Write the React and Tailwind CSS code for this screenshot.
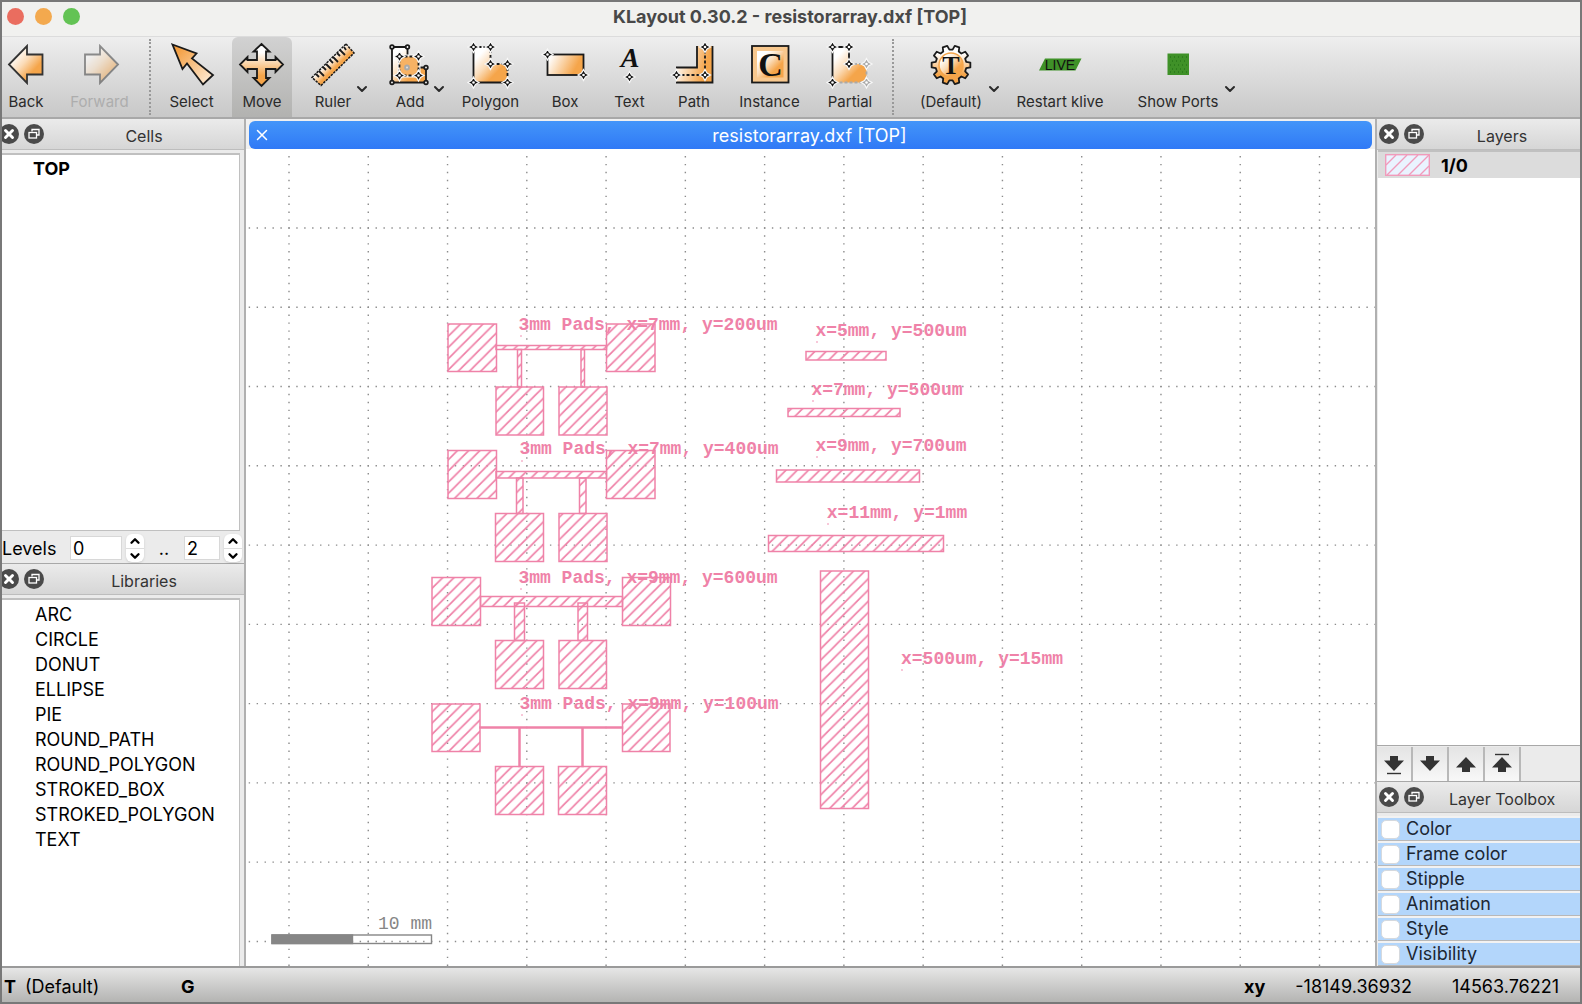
import React, { useState } from 'react';
import { ChevronDown, ChevronUp, X } from 'lucide-react';

const LIBRARIES = ['ARC', 'CIRCLE', 'DONUT', 'ELLIPSE', 'PIE', 'ROUND_PATH', 'ROUND_POLYGON', 'STROKED_BOX', 'STROKED_POLYGON', 'TEXT'];
const TOOLBOX = ['Color', 'Frame color', 'Stipple', 'Animation', 'Style', 'Visibility'];

const PINK = '#ef82a8';
const GRID = 79.27;

// x, y, width, height
const SHAPES = [
  // 7mm x 200um
  [202, 175, 48.5, 47.5], [360.5, 175, 48.5, 47.5], [250, 196.5, 110.5, 4], [271.5, 200.5, 4, 37.5], [335, 200.5, 3.5, 37.5], [250, 238, 47.5, 48], [313, 238, 48, 48],
  // 7mm x 400um
  [202, 301.5, 48.5, 48], [360.5, 301.5, 48.5, 48], [250, 322.5, 110.5, 6.5], [270.5, 329, 6.5, 35.5], [333.5, 329, 6.5, 35.5], [249.5, 364.5, 48, 48], [313, 364.5, 48, 48],
  // 9mm x 600um
  [186, 428.5, 48.5, 48], [376.5, 428.5, 48, 48], [234.5, 447.5, 142, 10], [268.5, 454, 10, 37.5], [332, 454, 9.5, 37.5], [249.5, 491.5, 48, 48], [313, 491.5, 47.5, 48],
  // 9mm x 100um
  [186, 555, 48, 47.5], [376.5, 555, 47.5, 47.5], [234, 578, 142.5, 1], [273, 579, 1, 38.5], [336, 579, 1, 38.5], [249.5, 617.5, 48, 48], [312.5, 617.5, 48, 48],
  // single bars
  [560, 202.5, 80, 8.5], [542, 259.5, 112, 8], [530.5, 321, 143, 12], [522.5, 386.5, 175, 16], [574.5, 422, 48, 237.5],
];

const LABELS = [
  { x: 402, y: 181, text: '3mm Pads, x=7mm, y=200um', dot: [275, 187] },
  { x: 403, y: 305, text: '3mm Pads, x=7mm, y=400um', dot: [276, 312] },
  { x: 402, y: 434, text: '3mm Pads, x=9mm, y=600um', dot: [275, 440] },
  { x: 403, y: 560, text: '3mm Pads, x=9mm, y=100um', dot: [276, 566] },
  { x: 645, y: 187, text: 'x=5mm, y=500um', dot: [571, 193] },
  { x: 641, y: 246, text: 'x=7mm, y=500um', dot: [567, 252] },
  { x: 645, y: 302, text: 'x=9mm, y=700um', dot: [571, 308] },
  { x: 651, y: 369, text: 'x=11mm, y=1mm', dot: [582, 375] },
  { x: 736, y: 515, text: 'x=500um, y=15mm', dot: [656, 521] },
];

const Star = ({ x, y, color = '#111' }) => (
  <g transform={`translate(${x} ${y})`}>
    <path d="M0 -5.5 L2 -2 L5.5 0 L2 2 L0 5.5 L-2 2 L-5.5 0 L-2 -2 Z" fill={color} stroke="#f8f8f8" strokeWidth="1.2" />
    <circle r="1.3" fill="#fff" stroke="none" />
  </g>
);

const Icon = ({ children, className }) => (
  <svg viewBox="0 0 44 44" className={`size-11 shrink-0 overflow-visible ${className || ''}`} fill="none" stroke="#1a1a1a" strokeWidth="1.8" aria-hidden="true">
    {children}
  </svg>
);

const IconDefs = () => (
  <svg className="absolute size-0" aria-hidden="true">
    <defs>
      <linearGradient id="diag" x1="0" y1="0" x2="1" y2="1">
        <stop offset="0.2" stopColor="#fff" />
        <stop offset="0.45" stopColor="#fbdcb8" />
        <stop offset="0.7" stopColor="#f5a54a" />
      </linearGradient>
      <linearGradient id="diagBack" x1="0" y1="0" x2="1" y2="1">
        <stop offset="0.1" stopColor="#f39c3c" />
        <stop offset="1" stopColor="#fef0e0" />
      </linearGradient>
      <linearGradient id="down" x1="0" y1="0" x2="0" y2="1">
        <stop offset="0.2" stopColor="#fff" />
        <stop offset="0.75" stopColor="#f5a54a" />
      </linearGradient>
      <linearGradient id="right" x1="0" y1="0" x2="1" y2="0.3">
        <stop offset="0.1" stopColor="#fff" />
        <stop offset="0.9" stopColor="#f5a54a" />
      </linearGradient>
      <linearGradient id="across" x1="0.35" y1="0.35" x2="0.65" y2="0.65">
        <stop offset="0.2" stopColor="#fff" />
        <stop offset="0.7" stopColor="#f5a54a" />
      </linearGradient>
    </defs>
  </svg>
);

const gearPoints = Array.from({ length: 40 }, (_, i) => {
  const phase = i % 4;
  const r = phase < 2 ? 19.5 : 15.5;
  const a = ((Math.floor(i / 4) * 36 + [-7, 7, 12, 24][phase] + 18) * Math.PI) / 180;
  return `${22 + r * Math.sin(a)},${22 - r * Math.cos(a)}`;
}).join(' ');

const icons = {
  Back: <Icon><path d="M5 21.5 L23 3 V11.5 H38.5 V31.5 H23 V40 Z" fill="url(#diag)" stroke="#333" /></Icon>,
  Forward: <Icon className="opacity-45"><path d="M40 21.5 L22 3 V11.5 H7 V31.5 H22 V40 Z" fill="url(#diag)" /></Icon>,
  Select: <Icon><path d="M2.5 1.5 L26.5 10.5 L22 15.5 L43 32 L33 41.5 L17 20.5 L12.5 26 Z" fill="url(#diagBack)" /></Icon>,
  Move: <Icon><path d="M21.5 1 L29.5 8.5 H26 V17 H35.5 V14 L43 21.5 L35.5 29 V26 H26 V35 H29.5 L21.5 43 L13.5 35 H17 V26 H7.5 V29 L0 21.5 L7.5 14 V17 H17 V8.5 H13.5 Z" fill="url(#down)" /></Icon>,
  Ruler: (
    <Icon>
      <path d="M35 1 L43 10 L10 42.5 L1 34.5 Z" fill="url(#across)" strokeDasharray="2.5 1" strokeWidth="1.5" />
      <path d="M5 31 l3 3 M8 28 l5 5 M12 24 l3 3 M15 21 l5 5 M19 17 l3 3 M22 14 l5 5 M26 10 l3 3 M29 7 l5 5 M33 4 l2 3" strokeWidth="1.8" />
    </Icon>
  ),
  Add: (
    <Icon>
      <path d="M4 4 H19.5 V24.5 H38 V39.5 H4 Z" fill="url(#diag)" />
      <rect x="11.5" y="13.5" width="19" height="19" fill="#f5a54a" stroke="#f8f8f8" strokeWidth="4" />
      <rect x="11.5" y="13.5" width="19" height="19" fill="#f7b264" strokeDasharray="3 2" />
      {[[4, 4], [19.5, 4], [38, 24.5], [38, 39.5], [4, 39.5]].map(([x, y]) => <circle key={`${x}-${y}`} cx={x} cy={y} r="1.8" fill="#fff" />)}
      <circle cx="19" cy="24.5" r="2" fill="#ddd" stroke="#aaa" />
      <Star x={11.5} y={13.5} /><Star x={30.5} y={13.5} /><Star x={11.5} y={32.5} /><Star x={30.5} y={32.5} />
    </Icon>
  ),
  Polygon: (
    <Icon>
      <path d="M4.5 4 H21.5 V21 H38.5 V39.5 H4.5 Z" fill="url(#diag)" stroke="none" />
      <path d="M4.5 4 V39.5 H38.5" />
      <path d="M4.5 4 H21.5 V21 H38.5 V39.5" strokeDasharray="3 2" />
      <Star x={4.5} y={4} /><Star x={21.5} y={4} /><Star x={21.5} y={21} /><Star x={38.5} y={21} /><Star x={38.5} y={39.5} /><Star x={4.5} y={39.5} />
    </Icon>
  ),
  Box: (
    <Icon>
      <rect x="4.5" y="11.5" width="36" height="20.5" fill="url(#right)" />
      <Star x={4.5} y={11.5} /><Star x={40.5} y={32} />
    </Icon>
  ),
  Text: (
    <Icon>
      <text x="22" y="24" textAnchor="middle" fill="#111" stroke="none" className="font-['Liberation_Serif',serif] text-[28px] font-bold italic">A</text>
      <Star x={21.5} y={34} />
    </Icon>
  ),
  Path: (
    <Icon>
      <path d="M4 24.5 H25 V3 H40.5 V39.5 H4 Z" fill="url(#right)" stroke="none" />
      <path d="M4 24.5 H25 V3 M40.5 3 V39.5 H4" />
      <path d="M4.5 32 H33 V4" strokeDasharray="3 2" />
      <Star x={4.5} y={32} /><Star x={33} y={32} /><Star x={33} y={4} />
    </Icon>
  ),
  Instance: (
    <Icon>
      <rect x="4" y="3" width="36.5" height="36.5" fill="#f8c88e" />
      <rect x="9" y="8" width="26.5" height="26.5" fill="url(#diag)" stroke="none" />
      <text x="22.5" y="32.5" textAnchor="middle" fill="#111" stroke="none" className="font-['Liberation_Serif',serif] text-[34px] font-bold">C</text>
    </Icon>
  ),
  Partial: (
    <Icon>
      <path d="M4.5 4 H21 V21 H38.5 V39.5 H4.5 Z" fill="url(#diag)" stroke="none" />
      <path d="M21 21 H38.5 V39.5 H4.5" stroke="#aaa" strokeDasharray="3 2" />
      <path d="M4.5 39.5 V4 H21 V21" />
      <Star x={4.5} y={4} /><Star x={21} y={4} /><Star x={21} y={21} /><Star x={4.5} y={39.5} />
      <Star x={38.5} y={21} color="#aaa" /><Star x={38.5} y={39.5} color="#aaa" />
    </Icon>
  ),
  '(Default)': (
    <Icon>
      <polygon points={gearPoints} fill="url(#down)" strokeLinejoin="round" />
      <circle cx="22" cy="22" r="12" fill="url(#diag)" stroke="#f5a54a" strokeWidth="1.5" />
      <text x="22" y="30.5" textAnchor="middle" fill="#111" stroke="none" className="font-['Liberation_Serif',serif] text-[26px] font-bold">T</text>
    </Icon>
  ),
  'Restart klive': (
    <Icon>
      <path d="M1 27.5 L7 15.5 H43.5 L37.5 27.5 Z" fill="#3f9128" stroke="none" />
      <text x="22" y="26.5" textAnchor="middle" fill="#111" stroke="none" className="font-['Liberation_Sans',sans-serif] text-[14px]">LIVE</text>
    </Icon>
  ),
  'Show Ports': (
    <Icon>
      <rect x="11.5" y="10.5" width="21.5" height="21.5" fill="#3f9128" stroke="none" />
      <path d="M14 14 H32 M16 18 H32 M14 22 H32 M16 26 H32 M14 29 H32" stroke="#1f6a12" strokeWidth="1" strokeDasharray="1 3" />
    </Icon>
  ),
};

const TOOLS = [
  { name: 'Back', box: 'w-[48px]' },
  { name: 'Forward', box: 'w-[99px]', disabled: true },
  { sep: true, box: '' },
  { name: 'Select', box: 'w-[81px]' },
  { name: 'Move', box: 'w-[60px]' },
  { name: 'Ruler', box: 'w-[82px]', menu: 'right-1' },
  { name: 'Add', box: 'w-[72px]', menu: '-right-px' },
  { name: 'Polygon', box: 'w-[89px]' },
  { name: 'Box', box: 'w-[60px]' },
  { name: 'Text', box: 'w-[69px]' },
  { name: 'Path', box: 'w-[60px]' },
  { name: 'Instance', box: 'w-[91px]' },
  { name: 'Partial', box: 'w-[70px]' },
  { sep: true, box: 'ml-[7px]' },
  { name: '(Default)', box: 'w-[114px]', menu: 'right-1.5' },
  { name: 'Restart klive', box: 'w-[104px]' },
  { name: 'Show Ports', box: 'w-[132px]', menu: 'right-1.5' },
];

const Toolbar = () => {
  const [active, setActive] = useState('Move');
  return (
    <div className="flex h-[83px] shrink-0 border-t border-b-2 border-t-[#dcdcdc] border-b-[#a8a8a8] bg-linear-to-b from-[#eeeeee] to-[#c8c8c8]">
      {TOOLS.map((t, i) => t.sep ? (
        <div key={i} className={`my-0.5 w-0 shrink-0 border-l-2 border-dotted border-[#999] ${t.box}`} />
      ) : (
        <button
          key={t.name}
          disabled={t.disabled}
          onClick={() => setActive(t.name)}
          className={`relative flex shrink-0 flex-col items-center rounded-t-md pt-1.5 text-[15px] leading-5 ${t.box} ${active === t.name ? 'bg-linear-to-b from-[#d2d2d2] to-[#b2b2b0]' : ''} ${t.disabled ? 'text-[#adadad]' : 'text-[#2a2a2a]'}`}
        >
          {icons[t.name]}
          <span className="mt-[5px] whitespace-nowrap">{t.name}</span>
          {t.menu && <ChevronDown className={`absolute top-11 size-4 ${t.menu}`} strokeWidth={3} />}
        </button>
      ))}
    </div>
  );
};

const DockHeader = ({ title, shift }) => (
  <div className="flex h-[31px] shrink-0 items-center overflow-hidden border-b border-[#bdbdbd] bg-linear-to-b from-[#ebebeb] to-[#d6d6d6]">
    <div className={`flex gap-[5px] ${shift}`}>
      <button aria-label={`Close ${title}`} className="flex size-5 items-center justify-center rounded-full bg-[#4a4a4a] text-white">
        <X className="size-3.5" strokeWidth={5} />
      </button>
      <button aria-label={`Detach ${title}`} className="flex size-5 items-center justify-center rounded-full bg-[#4a4a4a] text-white">
        <svg viewBox="0 0 12 12" className="size-3" fill="none" stroke="currentColor" strokeWidth="1.3">
          <path d="M4 3.5 V1.5 H11 V7 H9" />
          <rect x="1" y="4.5" width="7.5" height="5.5" />
        </svg>
      </button>
    </div>
    <h2 className="flex-1 pt-[3px] text-center text-[16px] text-[#333]">{title}</h2>
  </div>
);

const Spinner = ({ label, value, onChange, width }) => (
  <div className="flex items-center gap-1">
    <input aria-label={label} value={value} onChange={e => onChange(Number(e.target.value) || 0)} className={`h-6 border border-[#d8d8d8] bg-white pl-0.5 text-[18px] text-black ${width}`} />
    <div className="flex h-7 w-[18px] flex-col overflow-hidden rounded-md bg-white shadow-sm">
      <button aria-label={`${label} up`} onClick={() => onChange(value + 1)} className="flex flex-1 items-center justify-center border-b border-[#ddd]"><ChevronUp className="size-3.5" strokeWidth={4} /></button>
      <button aria-label={`${label} down`} onClick={() => onChange(Math.max(0, value - 1))} className="flex flex-1 items-center justify-center"><ChevronDown className="size-3.5" strokeWidth={4} /></button>
    </div>
  </div>
);

const LeftDock = () => {
  const [from, setFrom] = useState(0);
  const [to, setTo] = useState(2);
  return (
    <aside className="flex w-[244px] shrink-0 flex-col border-r-2 border-[#b0b0b0] bg-[#ebebeb]">
      <DockHeader title="Cells" shift="-ml-[3px]" />
      <ul className="mt-[3px] mr-1 h-[378px] border-t-2 border-r border-b border-[#c0c0c0] bg-white pt-px pl-[31px] text-[18px] leading-[25px] font-bold">
        <li>TOP</li>
      </ul>
      <div className="flex h-[33px] shrink-0 items-center border-b border-[#a8a8a8] pt-0.5 text-[18px]">
        <span className="w-[68px]">Levels</span>
        <Spinner label="Level from" value={from} onChange={setFrom} width="w-[52px]" />
        <span className="w-10 text-center">..</span>
        <Spinner label="Level to" value={to} onChange={setTo} width="w-[36px]" />
      </div>
      <DockHeader title="Libraries" shift="-ml-[3px]" />
      <ul className="mt-[3px] mr-1 flex-1 border-t-2 border-r border-[#c0c0c0] bg-white pt-0.5 pl-[33px] text-[18px] leading-[25px]">
        {LIBRARIES.map(l => <li key={l}>{l}</li>)}
      </ul>
    </aside>
  );
};

const LayoutView = () => (
  <main className="flex min-w-0 flex-1 flex-col bg-white">
    <div className="flex h-[30px] shrink-0 bg-[#f0f0f0] px-[3px] pt-0.5">
      <div className="flex flex-1 items-center rounded-md bg-linear-to-b from-[#4495f9] to-[#3079f6] px-1 text-white">
        <button aria-label="Close tab" className="flex size-[18px] items-center justify-center"><X className="size-[18px]" strokeWidth={2} /></button>
        <span className="flex-1 pt-0.5 pr-5 text-center text-[18px] leading-6">resistorarray.dxf [TOP]</span>
      </div>
    </div>
    <svg className="block min-h-0 w-full flex-1" fill="none" role="img" aria-label="Resistor array layout">
      <defs>
        <pattern id="hatch" width="11.23" height="11.23" patternUnits="userSpaceOnUse">
          <path d="M-2 9.7 L9.7 -2 M5.7 13.23 L13.23 5.7" stroke={PINK} strokeWidth="1.7" />
        </pattern>
      </defs>
      <g stroke="#8c8c8c" strokeWidth="1.4" strokeDasharray="1.4 6.527">
        {Array.from({ length: 14 }, (_, k) => <line key={k} x1={43 + GRID * k} x2={43 + GRID * k} y1="7" y2="817" />)}
        {Array.from({ length: 10 }, (_, k) => <line key={k} y1={79 + GRID * k} y2={79 + GRID * k} x1="2.7" x2="1129" />)}
      </g>
      {SHAPES.map(([x, y, w, h], i) => (
        <rect key={i} x={x} y={y} width={w} height={h} fill="url(#hatch)" stroke={PINK} strokeWidth="1.5" />
      ))}
      {LABELS.map(l => (
        <g key={l.text} fill={PINK}>
          <text x={l.x} y={l.y} textAnchor="middle" className="font-['Liberation_Mono',monospace] text-[18px] font-bold">{l.text}</text>
          <circle cx={l.dot[0]} cy={l.dot[1]} r="0.8" />
        </g>
      ))}
      <g stroke="#868686" strokeWidth="1.4">
        <rect x="26" y="786" width="159.5" height="8.5" />
        <rect x="26" y="786" width="80.5" height="8.5" fill="#868686" />
      </g>
      <text x="186" y="780" textAnchor="end" fill="#868686" className="font-['Liberation_Mono',monospace] text-[18px]">10 mm</text>
    </svg>
  </main>
);

const ARROW_DOWN = 'M7 4 H15 V8.5 H21 L11 19 L1 8.5 H7 Z';
const ARROW_UP = 'M7 20 H15 V15.5 H21 L11 5 L1 15.5 H7 Z';
const LAYER_MOVES = [
  { name: 'Move to bottom', d: ARROW_DOWN, bar: 'M4 21.5 H18' },
  { name: 'Move down', d: ARROW_DOWN },
  { name: 'Move up', d: ARROW_UP },
  { name: 'Move to top', d: ARROW_UP, bar: 'M4 2.5 H18' },
];

const RightDock = () => (
  <aside className="flex w-[205px] shrink-0 flex-col border-l-2 border-[#b0b0b0] bg-[#ebebeb]">
    <DockHeader title="Layers" shift="ml-0.5" />
    <ul className="ml-px flex-1 border-t-2 border-[#c0c0c0] bg-white">
      <li className="flex h-[26px] items-center gap-[11px] bg-[#dcdcdc] pl-[7px] text-[18px] font-bold">
        <svg width="45" height="22" fill="none" stroke="#f19bbb" strokeWidth="1.4">
          <rect x="0.7" y="0.7" width="43.6" height="20.6" fill="#eaf3ff" />
          <path d="M1 11 L11 1 M2 21 L22 1 M13 21 L33 1 M24 21 L44 1 M35 21 L44 12" />
        </svg>
        <span className="pt-px">1/0</span>
      </li>
    </ul>
    <div className="flex h-[37px] shrink-0 border-t border-b border-[#a8a8a8]">
      {LAYER_MOVES.map(m => (
        <button key={m.name} aria-label={m.name} className="mt-px flex w-[36px] items-center justify-center border-r-2 border-[#b8b8b8] bg-linear-to-b from-[#e4e4e4] to-[#f8f8f8]">
          <svg viewBox="0 0 22 24" className="h-6 w-[22px]" fill="#333">
            <path d={m.d} />
            {m.bar && <path d={m.bar} stroke="#333" strokeWidth="1.4" />}
          </svg>
        </button>
      ))}
    </div>
    <DockHeader title="Layer Toolbox" shift="ml-0.5" />
    <div className="ml-px pt-[3px]">
      {TOOLBOX.map(t => (
        <label key={t} className="flex h-[25px] items-center gap-1.5 border-t-2 border-b border-t-[#f2f2f2] border-b-[#b8b8b8] bg-[#b3d6fb] pl-[3px] text-[18px] text-[#1c2733]">
          <input type="checkbox" className="size-[19px] appearance-none rounded-[5px] border border-[#d5d9de] bg-white" />
          <span className="leading-[22px]">{t}</span>
        </label>
      ))}
    </div>
  </aside>
);

const App = () => (
  <div className="flex h-screen flex-col overflow-hidden border-2 border-[#787878] bg-[#ebebeb] font-['Inter',sans-serif] text-black">
    <IconDefs />
    <header className="flex h-[34px] shrink-0 items-center bg-[#f1f1ef] pb-1.5 pl-[5px]">
      <div className="flex w-[78px] gap-[11px]">
        <button aria-label="Close" className="size-[17px] rounded-full bg-[#ea6d5f]" />
        <button aria-label="Minimize" className="size-[17px] rounded-full bg-[#f3a94e]" />
        <button aria-label="Zoom" className="size-[17px] rounded-full bg-[#63c354]" />
      </div>
      <h1 className="flex-1 pt-0.5 pr-[85px] text-center text-[18px] leading-6 font-bold text-[#484848]">KLayout 0.30.2 - resistorarray.dxf [TOP]</h1>
    </header>
    <Toolbar />
    <div className="flex min-h-0 flex-1">
      <LeftDock />
      <LayoutView />
      <RightDock />
    </div>
    <footer className="flex h-9 shrink-0 items-center border-t-2 border-[#9a9a9a] bg-linear-to-b from-[#e6e6e6] to-[#b4b4b2] pt-[3px] pr-[21px] pl-0.5 text-[18px]">
      <span className="w-[21px] font-bold">T</span>
      <span className="w-[156px]">(Default)</span>
      <span className="font-bold">G</span>
      <span className="ml-auto font-bold">xy</span>
      <span className="ml-[30px]">-18149.36932</span>
      <span className="ml-10">14563.76221</span>
    </footer>
  </div>
);

export default App;
